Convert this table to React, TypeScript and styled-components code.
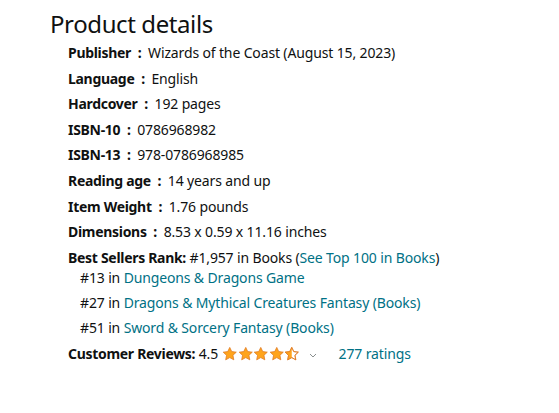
import styled, { createGlobalStyle } from 'styled-components';

const GlobalStyle = createGlobalStyle`
    body {
        margin: 0;
        background: #fff;
        font-family: "Noto Sans", Arial, sans-serif;
        color: #0f1111;
    }
`;

const Section = styled.section`
    padding: 8px 0 0 50px;
`;

const Title = styled.h2`
    margin: 0 0 3px;
    font-size: 24px;
    line-height: 32px;
    font-weight: 400;
    letter-spacing: -0.4px;
`;

const DetailList = styled.ul`
    list-style: none;
    margin: 0;
    padding: 0 0 0 18px;
`;

const DetailItem = styled.li`
    font-size: 14px;
    line-height: 20px;
    letter-spacing: -0.14px;
    margin-bottom: 5.6px;
`;

const Label = styled.span`
    font-weight: 700;
    letter-spacing: -0.3px;
`;

const Link = styled.a`
    color: #007185;
    text-decoration: none;
`;

const RankList = styled.ul`
    list-style: none;
    margin: 0 0 1.5px;
    padding: 0 0 0 12px;
`;

const RankItem = styled.li`
    & + & {
        margin-top: 5px;
    }
`;

const Stars = styled.span`
    display: inline-flex;
    align-items: center;
    vertical-align: -3px;
    margin-left: 4px;
`;

const Chevron = styled.span`
    display: inline-block;
    margin: 0 22px 0 9px;
    vertical-align: 1px;
`;

const details: [string, string][] = [
    ['Publisher', 'Wizards of the Coast (August 15, 2023)'],
    ['Language', 'English'],
    ['Hardcover', '192 pages'],
    ['ISBN-10', '0786968982'],
    ['ISBN-13', '978-0786968985'],
    ['Reading age', '14 years and up'],
    ['Item Weight', '1.76 pounds'],
    ['Dimensions', '8.53 x 0.59 x 11.16 inches'],
];

const ranks: [string, string][] = [
    ['#13', 'Dungeons & Dragons Game'],
    ['#27', 'Dragons & Mythical Creatures Fantasy (Books)'],
    ['#51', 'Sword & Sorcery Fantasy (Books)'],
];

const STAR = 'M8 1.2l2.05 4.3 4.7.6-3.45 3.25.88 4.65L8 11.7 3.82 14l.88-4.65L1.25 6.1l4.7-.6z';

function Star({ fill }: { fill: 'full' | 'half' }) {
    return (
        <svg width="15.5" height="16" viewBox="0 0 16 16">
            <defs>
                <clipPath id="halfClip">
                    <rect x="0" y="0" width="8" height="16" />
                </clipPath>
            </defs>
            {fill === 'full' ? (
                <path d={STAR} fill="#ffa41c" stroke="#de7921" strokeWidth="0.8" strokeLinejoin="round" />
            ) : (
                <>
                    <path d={STAR} fill="#fff" stroke="#de7921" strokeWidth="0.8" strokeLinejoin="round" />
                    <path d={STAR} fill="#ffa41c" clipPath="url(#halfClip)" />
                    <path d={STAR} fill="none" stroke="#de7921" strokeWidth="0.8" strokeLinejoin="round" />
                </>
            )}
        </svg>
    );
}

export default function App() {
    return (
        <>
            <GlobalStyle />
            <Section>
                <Title>Product details</Title>
                <DetailList>
                    {details.map(([label, value]) => (
                        <DetailItem key={label}>
                            <Label>{label} &nbsp;:&nbsp; </Label>
                            {value}
                        </DetailItem>
                    ))}
                    <DetailItem>
                        <Label>Best Sellers Rank:</Label> #1,957 in Books (<Link href="#">See Top 100 in Books</Link>)
                        <RankList>
                            {ranks.map(([rank, name]) => (
                                <RankItem key={rank}>
                                    {rank} in <Link href="#">{name}</Link>
                                </RankItem>
                            ))}
                        </RankList>
                    </DetailItem>
                    <DetailItem>
                        <Label>Customer Reviews:</Label> 4.5
                        <Stars>
                            <Star fill="full" />
                            <Star fill="full" />
                            <Star fill="full" />
                            <Star fill="full" />
                            <Star fill="half" />
                        </Stars>
                        <Chevron>
                            <svg width="8" height="5" viewBox="0 0 8 5">
                                <path d="M1 1l3 3 3-3" fill="none" stroke="#8a8f8f" strokeWidth="1" />
                            </svg>
                        </Chevron>
                        <Link href="#">277 ratings</Link>
                    </DetailItem>
                </DetailList>
            </Section>
        </>
    );
}
